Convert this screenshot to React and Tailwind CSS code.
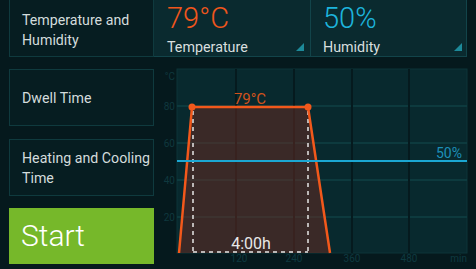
import React from "react";

const Corner = () => (
    <svg width="8" height="8" viewBox="0 0 8 8" className="mb-[6px]">
        <polygon points="8,0 8,8 0,8" fill="#1d8a9a" />
    </svg>
);

const SideBox = ({ children, className = "" }) => (
    <div className={"border border-[#0f3a3e] bg-[#061d21] pl-[12px] pr-1 text-[14.2px] leading-[20px] text-[#d3dcdc] whitespace-nowrap " + className}>
        {children}
    </div>
);

const Chart = () => {
    const gridY = [106, 143, 180, 217];
    const gridX = [236, 294, 352, 409];
    return (
        <svg width="322" height="212" viewBox="154 57 322 212" style={{ fontFamily: "Roboto, sans-serif" }}>
            <rect x="177" y="69" width="290" height="184" fill="#08292e" stroke="#0c3539" strokeWidth="1" />
            {gridY.map((y) => (
                <line key={y} x1="177" x2="467" y1={y} y2={y} stroke="#0f4045" strokeWidth="1.5" />
            ))}
            {gridX.map((x) => (
                <line key={x} x1={x} x2={x} y1="69" y2="253" stroke="#051a1e" strokeWidth="2" />
            ))}
            <polygon points="179,253 192,107 308,107 330,253" fill="#6c2a20" fillOpacity="0.5" />

            {/* y labels */}
            <g fill="#0f383e" fontSize="10" textAnchor="end">
                <text x="175" y="80">°C</text>
                <text x="175" y="110">80</text>
                <text x="175" y="147">60</text>
                <text x="175" y="184">40</text>
                <text x="175" y="221">20</text>
            </g>
            {/* x labels */}
            <g fill="#0e3a40" fontSize="10" textAnchor="middle">
                <text x="239" y="262">120</text>
                <text x="294" y="262">240</text>
                <text x="352" y="262">360</text>
                <text x="409" y="262">480</text>
                <text x="467" y="262" textAnchor="end">min</text>
            </g>

            {/* dwell markers */}
            <g stroke="#e6e6e6" strokeWidth="1.5" strokeDasharray="4 4">
                <line x1="193" x2="193" y1="111" y2="252" />
                <line x1="308" x2="308" y1="111" y2="252" />
                <line x1="193" x2="308" y1="252" y2="252" />
            </g>
            <text x="251" y="249" fill="#e8e8e8" fontSize="16" textAnchor="middle">4:00h</text>

            {/* temperature profile */}
            <polyline points="179,253 192,107 308,107 330,253" fill="none" stroke="#f2581b" strokeWidth="2.5" strokeLinejoin="round" />
            <circle cx="192" cy="107" r="3.5" fill="#f2581b" />
            <circle cx="308" cy="107" r="3.5" fill="#f2581b" />
            <text x="250" y="104" fill="#d0521c" fontSize="15" textAnchor="middle">79°C</text>

            {/* humidity */}
            <line x1="177" x2="467" y1="161" y2="161" stroke="#1ba7d3" strokeWidth="2" />
            <text x="462" y="158" fill="#1d8fb8" fontSize="14" textAnchor="end">50%</text>
        </svg>
    );
};

const App = () => {
    return (
        <div className="w-[476px] h-[269px] overflow-hidden bg-[#05191d] flex font-['Roboto',sans-serif]">
            <div className="ml-[9px] w-[145px] flex flex-col -mt-px">
                <SideBox className="h-[58px] pt-[10px]">
                    Temperature and<br />Humidity
                </SideBox>
                <SideBox className="mt-[12px] h-[57px] flex items-center">Dwell Time</SideBox>
                <SideBox className="mt-[13px] h-[57px] flex items-center">
                    <div>Heating and Cooling<br />Time</div>
                </SideBox>
                <button className="mt-[12px] h-[56px] bg-[#76b82a] text-left pl-[12px] text-white text-[30px] font-light leading-none">
                    Start
                </button>
            </div>
            <div className="flex-1 flex flex-col">
                <div className="w-[313px] h-[58px] -mt-px flex border-y border-r border-[#12444a] bg-[#0a2a2f]">
                    <div className="flex-1 flex flex-col pl-[13px] pt-[4px] border-r border-[#12444a]">
                        <div className="text-[29px] leading-[29px] font-light text-[#f0561c]">79°C</div>
                        <div className="mt-[4px] flex justify-between items-end pr-[6px]">
                            <span className="text-[14.3px] leading-[20px] text-[#d8dfdf]">Temperature</span>
                            <Corner />
                        </div>
                    </div>
                    <div className="flex-1 flex flex-col pl-[12px] pt-[4px]">
                        <div className="text-[29px] leading-[29px] font-light text-[#1db4dc]">50%</div>
                        <div className="mt-[4px] flex justify-between items-end pr-[4px]">
                            <span className="text-[14.3px] leading-[20px] text-[#d8dfdf]">Humidity</span>
                            <Corner />
                        </div>
                    </div>
                </div>
                <Chart />
            </div>
        </div>
    );
};

export default App;
